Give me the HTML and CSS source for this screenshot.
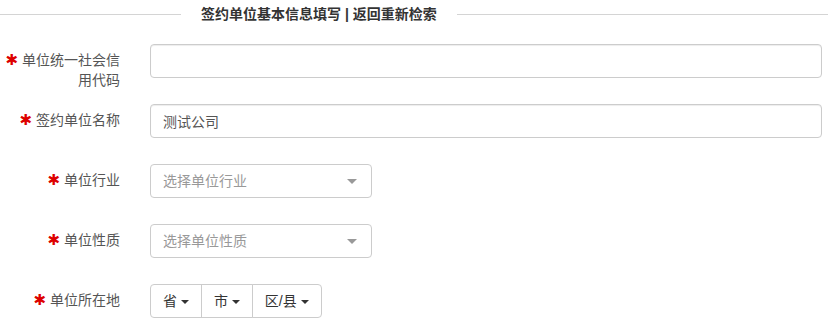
FILE: index.html
```html
<!DOCTYPE html>
<html lang="zh-CN">
<head>
  <meta charset="UTF-8">
  <title>签约单位基本信息填写</title>
  <link rel="stylesheet" href="styles.css">
</head>
<body>
  <div class="legend">
    <span class="legend-line"></span>
    <span class="legend-title">签约单位基本信息填写 | 返回重新检索</span>
    <span class="legend-line"></span>
  </div>

  <form class="unit-form">
    <div class="form-row">
      <label class="form-label"><span class="req">✱</span> 单位统一社会信用代码</label>
      <input type="text" class="form-input">
    </div>
    <div class="form-row">
      <label class="form-label"><span class="req">✱</span> 签约单位名称</label>
      <input type="text" class="form-input" value="测试公司">
    </div>
    <div class="form-row">
      <label class="form-label"><span class="req">✱</span> 单位行业</label>
      <div class="form-select">
        <span class="placeholder">选择单位行业</span>
        <span class="select-arrow"></span>
      </div>
    </div>
    <div class="form-row">
      <label class="form-label"><span class="req">✱</span> 单位性质</label>
      <div class="form-select">
        <span class="placeholder">选择单位性质</span>
        <span class="select-arrow"></span>
      </div>
    </div>
    <div class="form-row">
      <label class="form-label"><span class="req">✱</span> 单位所在地</label>
      <div class="btn-group">
        <button type="button" class="btn">省 <span class="caret"></span></button>
        <button type="button" class="btn">市 <span class="caret"></span></button>
        <button type="button" class="btn">区/县 <span class="caret"></span></button>
      </div>
    </div>
  </form>
</body>
</html>
```

FILE: styles.css
```css
body {
  margin: 0;
  background: #fff;
  color: #333;
  font-family: "Liberation Sans", "Noto Sans CJK SC", sans-serif;
  font-size: 14px;
  line-height: 20px;
  overflow: hidden;
}

.legend {
  display: flex;
  align-items: center;
  height: 28px;
}

.legend-line {
  flex: 1;
  border-top: 1px solid #d4d4d4;
}

.legend-line:first-child {
  flex: 0 0 181px;
}

.legend-title {
  padding: 0 20px;
  font-weight: bold;
  font-size: 14px;
  color: #333;
}

.unit-form {
  padding-top: 16px;
}

.form-row {
  display: flex;
  align-items: flex-start;
  height: 34px;
  margin-bottom: 26px;
}

.form-row:last-child {
  margin-bottom: 0;
}

.form-label {
  box-sizing: border-box;
  flex: 0 0 150px;
  padding: 6px 30px 0 5px;
  text-align: right;
  color: #555;
}

.req {
  color: #d00;
  font-family: "DejaVu Sans", sans-serif;
  font-size: 15px;
  font-weight: bold;
}

.form-input {
  box-sizing: border-box;
  width: 672px;
  height: 34px;
  padding: 6px 12px;
  border: 1px solid #ccc;
  border-radius: 4px;
  font: inherit;
  color: #555;
  box-shadow: inset 0 1px 1px rgba(0, 0, 0, 0.075);
}

.form-select {
  box-sizing: border-box;
  display: flex;
  align-items: center;
  justify-content: space-between;
  width: 222px;
  height: 34px;
  padding: 0 14px 0 12px;
  border: 1px solid #ccc;
  border-radius: 4px;
}

.placeholder {
  color: #999;
}

.select-arrow {
  width: 0;
  height: 0;
  border-left: 5px solid transparent;
  border-right: 5px solid transparent;
  border-top: 5px solid #999;
}

.btn-group {
  display: flex;
}

.btn {
  height: 34px;
  padding: 6px 12px;
  margin-left: -1px;
  background: #fff;
  border: 1px solid #ccc;
  font: inherit;
  color: #333;
}

.btn:first-child {
  margin-left: 0;
  border-radius: 4px 0 0 4px;
}

.btn:last-child {
  border-radius: 0 4px 4px 0;
}

.caret {
  display: inline-block;
  width: 0;
  height: 0;
  vertical-align: middle;
  border-left: 4px solid transparent;
  border-right: 4px solid transparent;
  border-top: 4px solid #333;
}
```
